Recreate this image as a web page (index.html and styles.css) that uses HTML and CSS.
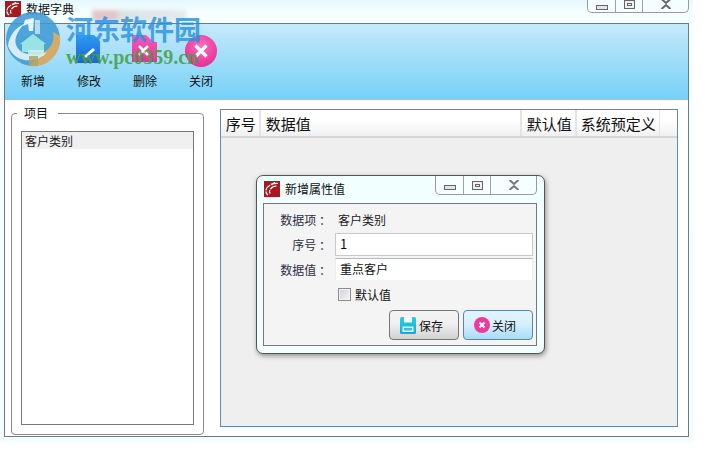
FILE: index.html
```html
<!DOCTYPE html>
<html lang="zh">
<head>
<meta charset="utf-8">
<title>数据字典</title>
<link rel="stylesheet" href="styles.css">
</head>
<body>
<div class="app">
  <div class="titlebar">
    <svg class="logo" viewBox="0 0 16 16"><rect width="16" height="16" fill="#a8191f"/><path d="M14 2.500C8 2 3 5 2 9c-.5 2 .5 4 2 5M12.500 5C9 5 6 7.500 5.500 10c-.2 1 .2 2 .8 2.500M11 1.500C10 2 8.500 2.500 7 3.500" fill="none" stroke="#fff" stroke-width="1.200" stroke-dasharray="7 1"/></svg>
    <span class="title">数据字典</span>
    <div class="blurbit"></div>
    <div class="winctl">
      <span class="c c1"><i class="min"></i></span>
      <span class="c c2"><i class="max"></i></span>
      <span class="c c3"><svg viewBox="0 0 12 10" class="x"><path d="M1.500 0L6 4 10.500 0M1.500 10L6 6l4.500 4" fill="none" stroke="#666" stroke-width="2"/></svg></span>
    </div>
  </div>
  <div class="frame">
    <div class="toolbar">
      <div class="tool">
        <svg class="ticon" viewBox="0 0 32 32"><rect x="4" y="1" width="24" height="28" fill="#7fe0dc"/></svg>
        <span>新增</span>
      </div>
      <div class="tool">
        <svg class="ticon" viewBox="0 0 32 32"><defs><linearGradient id="b" x1="0" y1="0" x2="0" y2="1"><stop offset="0" stop-color="#2f9cf0"/><stop offset="1" stop-color="#1764e0"/></linearGradient></defs><path d="M3 0h18l6 6v22H3z" fill="url(#b)"/><path d="M11 21l2 2 9-8-2-2z" fill="#fff"/></svg>
        <span>修改</span>
      </div>
      <div class="tool">
        <svg class="ticon" viewBox="0 0 32 32"><defs><linearGradient id="p" x1="0" y1="0" x2="0" y2="1"><stop offset="0" stop-color="#f65ab8"/><stop offset="1" stop-color="#ec2f9a"/></linearGradient></defs><path d="M3 0h14l8 7h3v20H3z" fill="url(#p)"/><path d="M10 11l9 9M19 11l-9 9" stroke="#fff" stroke-width="2.600"/></svg>
        <span>删除</span>
      </div>
      <div class="tool">
        <svg class="ticon" viewBox="0 0 32 32"><defs><radialGradient id="r" cx=".5" cy=".35" r=".7"><stop offset="0" stop-color="#fb6fc0"/><stop offset="1" stop-color="#e42a8e"/></radialGradient></defs><circle cx="16" cy="16" r="16" fill="url(#r)"/><path d="M10.500 10.500l11 11M21.500 10.500l-11 11" stroke="#fff" stroke-width="3.200"/></svg>
        <span>关闭</span>
      </div>
    </div>
    <div class="main">
      <fieldset class="group">
        <legend>项目</legend>
        <div class="list">
          <div class="row">客户类别</div>
        </div>
      </fieldset>
      <div class="table">
        <div class="thead">
          <div class="th w1">序号</div>
          <div class="th w2">数据值</div>
          <div class="th w3">默认值</div>
          <div class="th w4">系统预定义</div>
        </div>
      </div>
    </div>
  </div>
</div>

<div class="dialog">
  <div class="dtitle">
    <svg class="logo" viewBox="0 0 16 16"><rect width="16" height="16" fill="#a8191f"/><path d="M14 2.500C8 2 3 5 2 9c-.5 2 .5 4 2 5M12.500 5C9 5 6 7.500 5.500 10c-.2 1 .2 2 .8 2.500M11 1.500C10 2 8.500 2.500 7 3.500" fill="none" stroke="#fff" stroke-width="1.200" stroke-dasharray="7 1"/></svg>
    <span class="dname">新增属性值</span>
    <div class="winctl dctl">
      <span class="c c1"><i class="min"></i></span>
      <span class="c c2"><i class="max"></i></span>
      <span class="c c3"><svg viewBox="0 0 12 10" class="x"><path d="M1.500 0L6 4 10.500 0M1.500 10L6 6l4.500 4" fill="none" stroke="#777" stroke-width="2"/></svg></span>
    </div>
  </div>
  <div class="dbody">
    <div class="frow r1"><label>数据项 ：</label><span class="val">客户类别</span></div>
    <div class="frow r2"><label>序号 ：</label><div class="input">1</div></div>
    <div class="frow r3"><label>数据值 ：</label><div class="input i2">重点客户</div></div>
    <div class="frow r4"><label></label><span class="cb"></span><span class="cbl">默认值</span></div>
    <div class="btns">
      <div class="btn save">
        <svg viewBox="0 0 16 17" class="bi"><defs><linearGradient id="s" x1="0" y1="0" x2="0" y2="1"><stop offset="0" stop-color="#26d3e0"/><stop offset="1" stop-color="#14a8e0"/></linearGradient></defs><path d="M1.500 0h13q1.500 0 1.500 1.500v14q0 1.500-1.500 1.500h-13Q0 17 0 15.500v-14Q0 0 1.500 0z" fill="url(#s)"/><path d="M4 0h8v5.500H4z" fill="#f0fbfd"/><path d="M2.500 9.500h11V15h-11z" fill="#f0fbfd"/><path d="M4 11h8v2.500H4z" fill="#2cc4e2"/></svg>
        <span>保存</span>
      </div>
      <div class="btn close">
        <svg viewBox="0 0 16 16" class="bi2"><circle cx="8" cy="8" r="8" fill="#ec3b9c"/><path d="M5.500 5.500l5 5M10.500 5.500l-5 5" stroke="#fff" stroke-width="2"/></svg>
        <span>关闭</span>
      </div>
    </div>
  </div>
</div>

<div class="wm">
  <svg class="globe" viewBox="0 0 58 56">
    <circle cx="28" cy="27" r="27" fill="#3e9bd6" opacity=".95"/>
    <path d="M55 24A27 27 0 0 1 24 54L38 41C46 36 50 30 48 20z" fill="#dba65c"/>
    <path d="M3 34C4 24 10 16 19 12 12 20 8 28 12 35c4 8 18 10 30 5-10 12-32 12-39-6z" fill="#e4f3f6" opacity=".95"/>
    <path d="M20 8l8-2 1 1-1 12-4 0-1-7-5 2z" fill="#e8f6fa"/>
    <path d="M30 8h5v14h-5z" fill="#cfeaf2" opacity=".8"/>
    <path d="M15 32L28 22l13 10h-2v8H17v-8z" fill="#a6ebe8" opacity=".9"/>
    <path d="M23 38h16v6H23z" fill="#d6f2ee" opacity=".9"/>
    <path d="M24 44h9v10h-9z" fill="#b49f62" opacity=".85"/>
  </svg>
  <div class="wmtext">
    <div class="wm1">河东软件园</div>
    <div class="wm2">www.pc0359.cn</div>
  </div>
</div>
</body>
</html>
```
FILE: styles.css
```css
* { box-sizing: border-box; }
html, body { margin: 0; padding: 0; background: #fff; }
body {
  width: 703px;
  height: 462px;
  overflow: hidden;
  font-family: "Noto Sans CJK SC", "Liberation Sans", sans-serif;
  font-size: 12px;
  color: #222;
  position: relative;
}
.app {
  width: 693px;
  height: 442px;
  background: linear-gradient(#e6f8fe 0, #f6ffff 12px, #f2ffff 100%);
  display: flex;
  flex-direction: column;
  padding-right: 4px;
}
.titlebar {
  height: 23px;
  flex: none;
  display: flex;
  align-items: flex-start;
  padding: 1px 0 0 5px;
  position: relative;
}
.logo { width: 16px; height: 16px; flex: none; }
.title { margin-left: 5px; line-height: 16px; color: #111; }
.blurbit {
  width: 94px;
  height: 12px;
  margin: 9px 0 0 18px;
  background: linear-gradient(90deg, rgba(190, 90, 100, .35) 0, rgba(190, 90, 100, .35) 24%, rgba(120, 120, 130, .22) 30%, rgba(120, 120, 130, .15) 100%);
  filter: blur(2px);
}
.winctl {
  position: absolute;
  display: flex;
  right: 0;
  top: -1px;
  width: 102px;
  height: 14px;
  border: 1px solid #9a9a9a;
  border-top: 0;
  border-radius: 0 0 5px 5px;
  background: #f4fdff;
}
.c { display: flex; justify-content: center; align-items: center; border-right: 1px solid #a0a0a0; }
.c1 { width: 28px; }
.c2 { width: 27px; }
.c3 { flex: 1; border-right: 0; }
.min { display: block; width: 12px; height: 5px; border: 1px solid #666; background: #e4e4e4; margin-top: 4px; }
.max { display: block; width: 11px; height: 9px; border: 1px solid #666; background: #f0f0f0; margin-top: -3px; box-shadow: inset 0 0 0 2px #f0f0f0, inset 0 0 0 3px #666; }
.x { width: 12px; height: 10px; margin-top: -3px; }
.frame {
  margin-left: 4px;
  height: 414px;
  flex: none;
  border: 1px solid #777;
  background: #fff;
  display: flex;
  flex-direction: column;
}
.toolbar {
  height: 76px;
  flex: none;
  display: flex;
  background: linear-gradient(#c5e9fa, #76d0f8);
  padding: 11px 0 0 0;
}
.tool {
  width: 56px;
  display: flex;
  flex-direction: column;
  align-items: center;
  color: #111;
}
.ticon { width: 32px; height: 32px; flex: none; }
.tool span { margin-top: 6px; line-height: 16px; }
.main {
  display: flex;
  align-items: flex-start;
  padding: 0 10px 0 6px;
  flex: 1;
}
.group {
  width: 193px;
  height: 332px;
  margin: 3px 0 0 0;
  padding: 8px 9px 0;
  border: 1px solid #888;
  border-radius: 4px;
  min-width: 0;
}
.group legend {
  padding: 0 10px 0 7px;
  margin-left: -4px;
  height: 20px;
  line-height: 20px;
  color: #111;
}
.list {
  width: 173px;
  height: 294px;
  border: 1px solid #777;
  background: #fff;
}
.row {
  height: 17px;
  line-height: 17px;
  padding-left: 3px;
  background: #f0f0f0;
}
.table {
  width: 459px;
  height: 318px;
  margin: 9px 0 0 16px;
  border: 1px solid #5f88b4;
  background: #efefef;
}
.thead {
  height: 28px;
  display: flex;
  background: linear-gradient(#fff 0, #fff 40%, #f0f0f0 100%);
  border-bottom: 2px solid #d6d6d6;
  font-size: 15px;
  color: #111;
}
.th {
  padding-left: 5px;
  line-height: 28px;
  border-right: 2px solid #e4e4e4;
  white-space: nowrap;
}
.w1 { width: 40px; }
.w2 { width: 261px; }
.w3 { width: 55px; }
.w4 { width: 83px; border-right-width: 1px; padding-left: 4px; }

.dialog {
  position: absolute;
  left: 256px;
  top: 175px;
  width: 289px;
  height: 179px;
  border: 1px solid #555;
  border-radius: 7px;
  background: #f2ffff;
  box-shadow: 1px 2px 5px rgba(0, 0, 0, .4);
  padding: 0 7px 0 6px;
  display: flex;
  flex-direction: column;
}
.dtitle {
  height: 27px;
  flex: none;
  position: relative;
  display: flex;
  align-items: flex-start;
  padding: 5px 0 0 1px;
}
.dname { margin-left: 5px; line-height: 16px; color: #111; }
.dctl { right: 0; top: 0; width: 102px; height: 19px; background: #f6ffff; }
.dctl .c1 { width: 28px; }
.dctl .min { margin-top: 4px; }
.dctl .max { margin-top: 0; }
.dctl .x { margin-top: 0; }
.dbody {
  width: 274px;
  height: 143px;
  flex: none;
  border: 1px solid #777;
  background: #f4f4f4;
  display: flex;
  flex-direction: column;
}
.frow { display: flex; align-items: center; }
.frow label {
  width: 71px;
  flex: none;
  padding-right: 4px;
  text-align: right;
  color: #2e2e44;
}
.r1 { height: 21px; margin-top: 5px; }
.r2 { height: 23px; margin-top: 3px; }
.r3 { height: 22px; margin-top: 2px; }
.r4 { height: 14px; margin-top: 7px; }
.val { margin-left: 3px; }
.input {
  width: 198px;
  height: 100%;
  background: #fff;
  border: 1px solid #c8c8d0;
  padding-left: 4px;
  line-height: 20px;
  color: #111;
}
.i2 { border-bottom: 0; border-left-color: #ececec; border-right-color: #ececec; border-top-color: #b8b8b8; }
.r2 .input { font-size: 13px; }
.cb {
  width: 13px;
  height: 13px;
  margin-left: 3px;
  border: 1px solid #8a8a8a;
  background: linear-gradient(135deg, #d0d0d8, #f6f6f6);
  box-shadow: inset 0 0 0 1px #f4f4f4;
}
.cbl { margin-left: 4px; color: #111; }
.btns {
  display: flex;
  justify-content: flex-end;
  gap: 4px;
  padding-right: 3px;
  margin-top: 9px;
}
.btn {
  width: 70px;
  height: 30px;
  border-radius: 4px;
  display: flex;
  align-items: center;
  color: #111;
  font-size: 12px;
}
.btn svg { flex: none; }
.save {
  border: 1px solid #777;
  background: linear-gradient(#f3f3f3, #f0f0f0 45%, #d2d2d2);
  padding-left: 10px;
}
.close {
  border: 1px solid #5a86ac;
  background: linear-gradient(#e4f4fd, #d8f0fc 45%, #a8dcf6);
  padding-left: 10px;
}
.bi { width: 16px; height: 17px; margin-right: 3px; }
.bi2 { width: 16px; height: 16px; margin-right: 2px; }

.wm {
  position: absolute;
  left: 5px;
  top: 12px;
  display: flex;
  pointer-events: none;
}
.globe { width: 58px; height: 56px; opacity: .92; flex: none; }
.wmtext { margin-left: 3px; font-family: "Liberation Serif", "Noto Sans CJK SC", serif; font-weight: 700; }
.wm1 {
  font-family: "Noto Sans CJK SC", sans-serif;
  font-size: 27px;
  line-height: 34px;
  color: rgba(40, 145, 225, .82);
  white-space: nowrap;
}
.wm2 {
  font-size: 20px;
  line-height: 20px;
  margin-top: 1px;
  color: rgba(70, 160, 70, .88);
  white-space: nowrap;
}
```
